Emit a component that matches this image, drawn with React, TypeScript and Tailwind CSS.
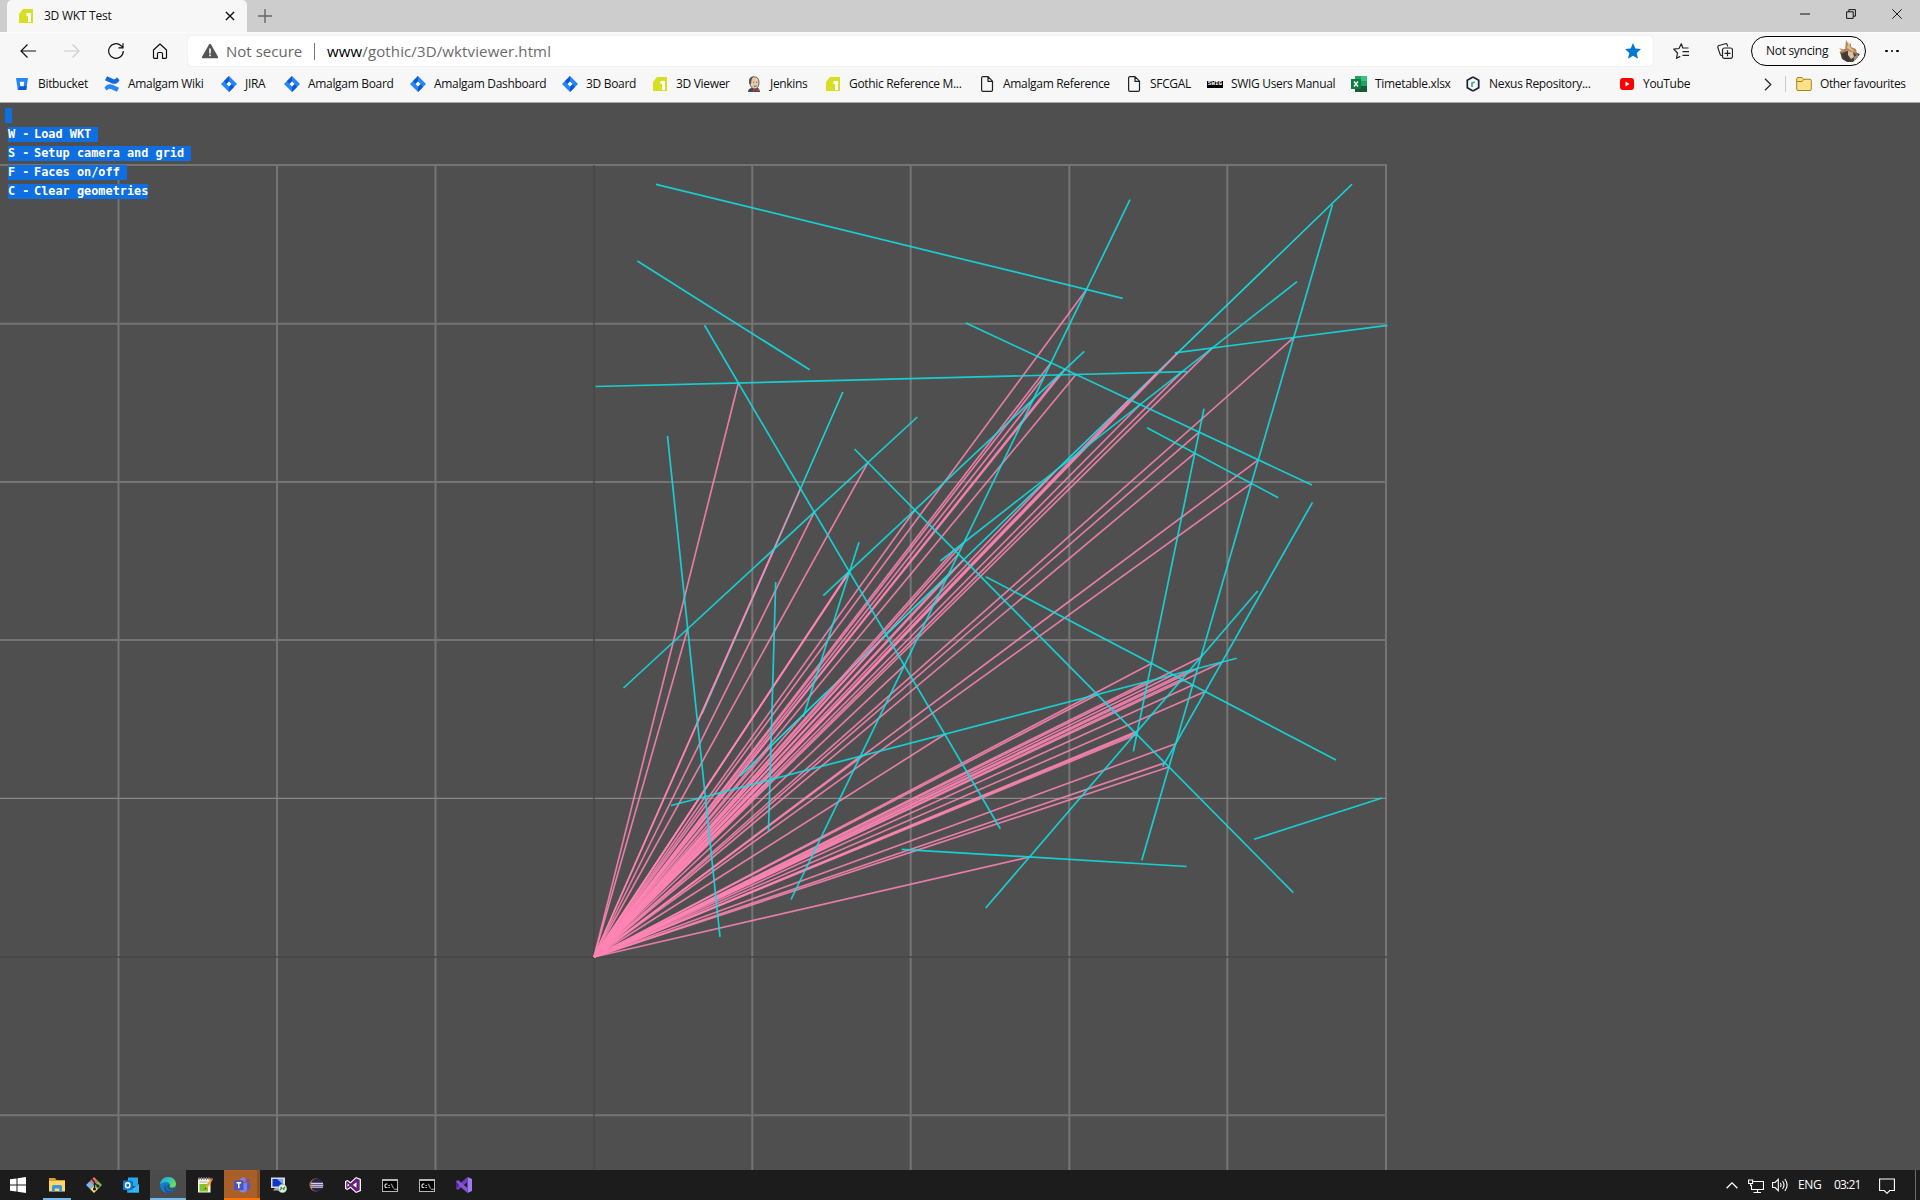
import type { ReactNode } from "react";

type Segment = [number, number, number, number];

const ORIGIN = { x: 594, y: 957 };

const SEGMENTS: Segment[] = [
  [656, 184.3, 1122.7, 298.3],
  [637.3, 261, 809.7, 369.7],
  [704.5, 325.3, 1000.3, 828.7],
  [595.5, 386.5, 1187.3, 371.7],
  [842.8, 392, 702, 714],
  [667.5, 436, 720, 936.8],
  [917.3, 417, 623.5, 688],
  [854.5, 449, 1293.3, 892.7],
  [859, 542.2, 803.3, 716.7],
  [823.3, 595.7, 1084.3, 351.3],
  [966, 323, 1312, 485],
  [1130, 199.7, 791, 899.5],
  [1352, 184.3, 740, 776],
  [1297, 281.7, 940.3, 561],
  [1174.8, 352.8, 1387.5, 325.3],
  [1332.5, 204.5, 1141.8, 860.3],
  [1204, 408.7, 1133.3, 751.3],
  [1147, 427.7, 1278.3, 497.7],
  [1312.5, 502.3, 1162.7, 766.7],
  [985.7, 576.7, 1336, 760],
  [1257.7, 591, 985.7, 908],
  [671, 805.5, 1236.7, 658.3],
  [775.7, 582, 768.5, 830.8],
  [901.7, 849.3, 1186.6, 866.5],
  [1254, 839.3, 1382, 798],
];

// Segments that run nearly along the rays and are hidden behind them.
const BEHIND = [4, 12];

function crossing(a: Segment, b: Segment) {
  const rx = a[2] - a[0];
  const ry = a[3] - a[1];
  const sx = b[2] - b[0];
  const sy = b[3] - b[1];
  const d = rx * sy - ry * sx;
  if (d === 0) return null;
  const t = ((b[0] - a[0]) * sy - (b[1] - a[1]) * sx) / d;
  const u = ((b[0] - a[0]) * ry - (b[1] - a[1]) * rx) / d;
  if (t < 0 || t > 1 || u < 0 || u > 1) return null;
  return { x: a[0] + t * rx, y: a[1] + t * ry };
}

const RAYS = SEGMENTS.flatMap((a, i) =>
  SEGMENTS.slice(i + 1)
    .map((b) => crossing(a, b))
    .filter((p): p is { x: number; y: number } => p !== null),
);

function Line({ s, color, width = 1.7 }: { s: Segment; color: string; width?: number }) {
  return <line x1={s[0]} y1={s[1]} x2={s[2]} y2={s[3]} stroke={color} strokeWidth={width} />;
}

function Scene() {
  return (
    <svg className="absolute inset-0 h-full w-full" viewBox="0 103 1920 1067">
      {[118.5, 277, 435.5, 752.3, 910.7, 1069.3, 1227.3, 1386].map((x) => (
        <Line key={x} s={[x, 164, x, 1170]} color="#757575" width={2} />
      ))}
      {[165, 323.7, 482, 640, 798.4, 1115.3].map((y) => (
        <Line key={y} s={[0, y, 1387, y]} color={y === 798.4 ? "#888888" : "#747474"} width={y === 798.4 ? 1.4 : 2} />
      ))}
      <Line s={[594, 165, 594, 1170]} color="#464646" width={1.4} />
      <Line s={[0, 957, 1387, 957]} color="#464646" width={1.4} />
      {BEHIND.map((i) => (
        <Line key={i} s={SEGMENTS[i]} color="#12dde0" width={1.5} />
      ))}
      {RAYS.map((p, i) => (
        <line key={i} x1={ORIGIN.x} y1={ORIGIN.y} x2={p.x} y2={p.y} stroke="#ff85b5" strokeOpacity={0.86} strokeWidth={1.65} />
      ))}
      {SEGMENTS.map((s, i) => (BEHIND.includes(i) ? null : <Line key={i} s={s} color="#10dfe3e0" />))}
      <Line s={[950, 572.9, 882, 638.7]} color="#12dde0" width={1.4} />
      <Line s={[826, 692.8, 770, 747]} color="#12dde0" width={1.4} />
      <Line s={[758, 758.6, 740, 776]} color="#12dde0" width={1.4} />
    </svg>
  );
}

function Svg({ children, size = 16, className = "" }: { children: ReactNode; size?: number; className?: string }) {
  return (
    <svg width={size} height={size} viewBox="0 0 16 16" fill="none" className={`shrink-0 ${className}`}>
      {children}
    </svg>
  );
}

const OneIcon = () => (
  <Svg>
    <path d="M1 6 5 1h10v14H1z" fill="#d7df23" />
    <path d="M8.500 5h4.500v9H10V8H8.500z" fill="#fff" />
  </Svg>
);
const BitbucketIcon = () => (
  <Svg>
    <path d="M2 2h12l-1.800 12H3.800z" fill="#2684ff" />
    <path d="M11 10h1.800l-.6 4H3.800L6 10z" fill="#0b5cd8" />
    <path d="M5.700 5.800h4.600l-.7 4.400H6.400z" fill="#fff" />
  </Svg>
);
const ConfluenceIcon = () => (
  <Svg>
    <path d="M.5 11.800C3 7.500 6 7.600 9 9.100l6 2.700-2 4-5.500-2.500c-2-1-3.200-.6-4.500 1.400z" fill="#2684ff" />
    <path d="M15.500 4.200C13 8.500 10 8.400 7 6.900L1 4.200l2-4 5.500 2.500c2 1 3.200.6 4.500-1.400z" fill="#1268e3" />
  </Svg>
);
const JiraIcon = () => (
  <Svg>
    <path d="M8 0l8 8-8 8-8-8z" fill="#2684ff" />
    <path d="M8 0v5.500L5.500 8 3 5z M8 16v-5.500L10.500 8l2.500 3z" fill="#0a58d4" />
    <path d="M8 5.500 10.500 8 8 10.500 5.500 8z" fill="#fff" />
  </Svg>
);
const JenkinsIcon = () => (
  <Svg>
    <path d="M2 16c0-3 2-4 4-4l6 0c1 1 2 2 2 4z" fill="#354a5a" />
    <path d="M4 3C5 .3 11-.2 12.500 3.500c1 3 .5 9-3.500 9.500-4 0-6-5-5-10z" fill="#e7cba8" stroke="#444" strokeWidth=".8" />
    <path d="M3.500 8C2 4 4 .5 7.500.6 5.500 2.500 5.500 5 5 8z" fill="#5b554c" />
    <path d="M7.200 6.200h1M10.200 6.200h1M7.800 10q1.500.8 2.800-.2" stroke="#333" strokeWidth=".8" />
    <path d="m7 12.800 2.500 1.200L13 12.600v3L9.500 14.500 7 16z" fill="#d33833" />
  </Svg>
);
const PageIcon = () => (
  <Svg>
    <path d="M2.600 2Q2.600.7 4 .7h5l4.500 4.500v8.800q0 1.300-1.300 1.300H4q-1.400 0-1.400-1.300zM9 .7V5.300h4.500" stroke="#222" strokeWidth="1.200" />
  </Svg>
);
const SwigIcon = () => (
  <span className="flex h-[7px] w-4 shrink-0 items-center justify-center bg-black font-['Liberation_Mono',monospace] text-[6px] font-bold leading-none text-white">SWIG</span>
);
const ExcelIcon = () => (
  <Svg>
    <path d="M4 0h6v16H4z" fill="#21a366" />
    <path d="M10 0h6v5h-6z" fill="#33c481" />
    <path d="M4 5h6v6H4z" fill="#107c41" />
    <path d="M10 5h6v5h-6z" fill="#21a366" />
    <path d="M4 10h12v6H4z" fill="#185c37" />
    <path d="M0 3h10v10H0z" fill="#107c41" />
    <path d="m3 5.500 4 5m0-5-4 5" stroke="#fff" strokeWidth="1.400" />
  </Svg>
);
const NexusIcon = () => (
  <Svg>
    <path d="M8 1 2.300 4.300v7.400L8 15" stroke="#223" strokeWidth="1.700" />
    <path d="m8 15 5.700-3.300V8" stroke="#223" strokeWidth="1.700" />
    <path d="M8 1l5.700 3.300V8" stroke="#223" strokeWidth="1.700" />
    <path d="M7 11V6.200M7 7.600Q8 6 9.700 6.300" stroke="#1fb573" strokeWidth="1.600" />
  </Svg>
);
const YoutubeIcon = () => (
  <Svg>
    <rect x="1" y="2" width="14" height="12" rx="3" fill="#f00" />
    <path d="m6.500 5.500 4 2.500-4 2.500z" fill="#fff" />
  </Svg>
);

const BOOKMARKS: { label: string; box: string; icon: ReactNode }[] = [
  { label: "Bitbucket", box: "w-[90px]", icon: <BitbucketIcon /> },
  { label: "Amalgam Wiki", box: "w-[117px]", icon: <ConfluenceIcon /> },
  { label: "JIRA", box: "w-[63px]", icon: <JiraIcon /> },
  { label: "Amalgam Board", box: "w-[126px]", icon: <JiraIcon /> },
  { label: "Amalgam Dashboard", box: "w-[152px]", icon: <JiraIcon /> },
  { label: "3D Board", box: "w-[90px]", icon: <JiraIcon /> },
  { label: "3D Viewer", box: "w-[94px]", icon: <OneIcon /> },
  { label: "Jenkins", box: "w-[79px]", icon: <JenkinsIcon /> },
  { label: "Gothic Reference M...", box: "w-[154px]", icon: <OneIcon /> },
  { label: "Amalgam Reference", box: "w-[147px]", icon: <PageIcon /> },
  { label: "SFCGAL", box: "w-[81px]", icon: <PageIcon /> },
  { label: "SWIG Users Manual", box: "w-[144px]", icon: <SwigIcon /> },
  { label: "Timetable.xlsx", box: "w-[114px]", icon: <ExcelIcon /> },
  { label: "Nexus Repository...", box: "w-[154px]", icon: <NexusIcon /> },
  { label: "YouTube", box: "w-[145px]", icon: <YoutubeIcon /> },
];

function TabStrip() {
  return (
    <div className="flex h-8 shrink-0 bg-[#cdcdcd] pl-[7px]">
      <div className="flex w-[240px] items-center rounded-t-[5px] bg-[#f7f7f7] pl-[11px] pr-3">
        <OneIcon />
        <span className="ml-[10px] flex-1 text-[12px] tracking-[-0.25px]">3D WKT Test</span>
        <Svg size={10}>
          <path d="m1.500 1.500 13 13m0-13-13 13" stroke="#111" strokeWidth="2.200" />
        </Svg>
      </div>
      <div className="flex w-[37px] items-center justify-end pr-3">
        <Svg size={14}>
          <path d="M8 0v16M0 8h16" stroke="#666" strokeWidth="1.600" />
        </Svg>
      </div>
      <div className="ml-auto flex h-7 items-center gap-9 pr-[18px]">
        <Svg size={10}>
          <path d="M0 8h16" stroke="#111" strokeWidth="1.600" />
        </Svg>
        <Svg size={10}>
          <path d="M1 4.500h10.500V15H1zM4.500 4.500V1H15v10.500h-3.500" stroke="#111" strokeWidth="1.600" />
        </Svg>
        <Svg size={10}>
          <path d="m.5.5 15 15m0-15-15 15" stroke="#111" strokeWidth="1.500" />
        </Svg>
      </div>
    </div>
  );
}

function Avatar() {
  return (
    <svg width="24" height="24" viewBox="0 0 24 24" className="ml-auto shrink-0">
      <path d="M3 13l5-3 8-1 4 5 3 1-3 4-4 4-6 0-5-3z" fill="#54402f" />
      <path d="m8 11 1-10 3 5 2-2 0 4 5 2 1 6-4-3-6-1-5 2-3-1 3-1-3-3z" fill="#b9875c" />
      <path d="m12 2 1 6 5 5-3-1-5-3z" fill="#e0bd92" />
      <path d="M11 12l5 1 1 5-3 2-3-4z" fill="#e2bfa0" />
      <path d="m6 15 4-1 2 5 4 3-6 0-4-3z" fill="#3b3a40" />
      <path d="m17 18 4-3 0 3-4 4z" fill="#8b8f98" />
    </svg>
  );
}

function Toolbar() {
  return (
    <div className="flex h-[38px] shrink-0 items-center border-t border-[#fbfbfb] pb-px pl-5">
      <Svg className="mr-7">
        <path d="M16 8H1M7.500 1.500 1 8l6.500 6.500" stroke="#111" strokeWidth="1.200" />
      </Svg>
      <Svg className="mr-7">
        <path d="M0 8h15M8.500 1.500 15 8l-6.500 6.500" stroke="#ccc" strokeWidth="1.200" />
      </Svg>
      <Svg className="mr-7">
        <path d="M15.300 8A7.300 7.300 0 1 1 13 2.700l1.800 1.800M15 .2v4.600h-4.600" stroke="#111" strokeWidth="1.200" />
      </Svg>
      <Svg className="mr-5">
        <path d="M1.500 7 8 1l6.500 6v7.500q0 .8-.8.800h-3.200V10.500q0-1-1-1h-3q-1 0-1 1v4.800H2.300q-.8 0-.8-.8z" stroke="#111" strokeWidth="1.200" strokeLinejoin="round" />
      </Svg>
      <div className="flex h-[30px] w-[1465px] items-center rounded-[4px] bg-white pl-[14px] pr-3 shadow-[0_0_1px_#ccc]">
        <Svg>
          <path d="M8 .8Q8.500.8 9 1.600l7 12.200q.5 1.500-1 1.500H1q-1.500 0-1-1.500L7 1.600Q7.500.8 8 .8z" fill="#555" />
          <path d="M8 5.500v5M8 11.500v1.800" stroke="#fff" strokeWidth="1.600" />
        </Svg>
        <span className="ml-2 w-[88px] shrink-0 whitespace-nowrap text-[15px] tracking-[0.02px] text-[#666]">Not secure</span>
        <span className="h-[17px] w-px bg-[#777]" />
        <span className="ml-3 text-[15px] tracking-[0.13px] text-[#6b6b6b]">
          <span className="text-black">www</span>/gothic/3D/wktviewer.html
        </span>
        <Svg className="ml-auto">
          <path d="m8 0 2.300 5.400 5.700.5-4.300 4 1.300 5.900L8 12.700 3 15.800l1.300-5.900L0 5.900l5.700-.5z" fill="#0078d4" />
        </Svg>
      </div>
      <Svg className="ml-5">
        <path d="M15.500 5H9.800L8.300.8 6 5.500.7 6.200l3.800 3.800-1 5.300L7.300 13.400M9.500 8.700h6.500M9.500 12.400h6.500" stroke="#222" strokeWidth="1.200" strokeLinejoin="round" />
      </Svg>
      <Svg className="ml-7">
        <path d="M5.500 12.500H4.500Q3.500 12.500 3.200 11.500L.8 4.500Q.5 3 2 2.500L8.500.7q1.300-.3 1.700 1L10.800 3.500" stroke="#222" strokeWidth="1.100" />
        <rect x="5.500" y="5" width="10" height="10.400" rx="2" stroke="#222" strokeWidth="1.200" />
        <path d="M10.500 7.300v6M7.500 10.300h6" stroke="#222" strokeWidth="1.200" />
      </Svg>
      <div className="ml-[18px] flex h-[30px] w-[115px] items-center rounded-full border border-black bg-[#f9f9f9] pl-[14px] pr-1 text-[12px]">
        <span className="whitespace-nowrap tracking-[-0.3px]">Not syncing</span>
        <Avatar />
      </div>
      <div className="ml-[19px] flex gap-[3px]">
        <span className="size-[2.5px] rounded-full bg-black" />
        <span className="size-[2.5px] rounded-full bg-black" />
        <span className="size-[2.5px] rounded-full bg-black" />
      </div>
    </div>
  );
}

function BookmarkBar() {
  return (
    <div className="flex h-[33px] shrink-0 items-center border-b border-[#a9a9a9] pb-[6px] pl-[14px] pt-[2px] text-[12px]">
      {BOOKMARKS.map((b) => (
        <div key={b.label} className={`flex shrink-0 items-center gap-2 ${b.box}`}>
          {b.icon}
          <span className="whitespace-nowrap tracking-[-0.32px]">{b.label}</span>
        </div>
      ))}
      <svg width="8" height="13" viewBox="0 0 8 13" fill="none" className="shrink-0">
        <path d="m1 .8 5.800 5.700L1 12.200" stroke="#222" strokeWidth="1.200" />
      </svg>
      <span className="ml-[13px] mr-[10px] h-4 w-px bg-[#ccc]" />
      <Svg>
        <path d="M.7 3Q.7 1.500 2 1.500h4l1.500 1.800H14q1.300 0 1.300 1.300v8.600q0 1.300-1.300 1.300H2Q.7 14.500.7 13.200z" fill="#fbe18a" stroke="#a98416" />
        <path d="M1 5.500h5l1.500-2" stroke="#a98416" />
      </Svg>
      <span className="ml-2 whitespace-nowrap tracking-[-0.38px]">Other favourites</span>
    </div>
  );
}

const HELP = [
  { key: "W", text: "Load WKT", end: "pr-[7px]" },
  { key: "S", text: "Setup camera and grid", end: "pr-[7px]" },
  { key: "F", text: "Faces on/off", end: "pr-[7px]" },
  { key: "C", text: "Clear geometries", end: "" },
];

function Help() {
  return (
    <div className="relative flex flex-col items-start gap-1 pl-2 pt-[5px] font-['DejaVu_Sans_Mono',monospace] text-[11.88px] font-bold leading-[15px] text-white">
      <span className="-ml-[3px] h-[15px] w-[7px] bg-[#0f6fe0]" />
      {HELP.map((h) => (
        <span key={h.key} className={`flex whitespace-pre bg-[#0f6fe0] ${h.end}`}>
          <span className="w-[26px]">{h.key} -</span>
          {h.text}
        </span>
      ))}
    </div>
  );
}

const CmdIcon = () => (
  <span className="flex h-[13px] w-4 items-center border border-t-2 border-[#b5b5b5] bg-black pl-px font-['DejaVu_Sans_Mono',monospace] text-[6px] font-bold leading-none tracking-[-0.3px] text-white">
    C:\_
  </span>
);

const TASKS: { tile?: string; icon: ReactNode }[] = [
  {
    tile: "before:absolute before:bottom-0 before:left-[4px] before:h-[2px] before:w-[28px] before:bg-[#76b9ed]",
    icon: (
      <Svg>
        <path d="M0 1h6l1.500 2H16v3H0z" fill="#d9a028" />
        <path d="M0 4h16v10.500H0z" fill="#ffd668" />
        <path d="M3 15V9.500Q3 8 4.500 8h7Q13 8 13 9.500V15h-2.800v-3.500H5.800V15z" fill="#3a97de" />
      </Svg>
    ),
  },
  {
    icon: (
      <Svg>
        <path d="m8 0 4 4-4 4-4-4z" fill="#e8716a" />
        <path d="m4 4 4 4-4 4-4-4z" fill="#7db4ee" />
        <path d="m12 4 4 4-4 4-4-4z" fill="#7fbf5a" />
        <path d="m8 8 4 4-4 4-4-4z" fill="#f2dc84" />
        <path d="m6 2 2.500 3v8M8.500 6l3.500 3" stroke="#222" strokeWidth="1.300" />
        <circle cx="8.500" cy="12" r="1.600" fill="#222" />
        <circle cx="12" cy="9" r="1.500" fill="#222" />
      </Svg>
    ),
  },
  {
    icon: (
      <Svg>
        <path d="M5 .5h10v9H5z" fill="#28a8ea" />
        <path d="M5 5h5v5H5z" fill="#0364b8" />
        <path d="M4 8l6 3 6-4v8.500H4z" fill="#1490df" />
        <path d="m4 15.500 12-8v8z" fill="#35b8f1" />
        <path d="M0 3.500h9.500v9.500H0z" fill="#0f78d4" />
        <ellipse cx="4.700" cy="8.200" rx="2.200" ry="2.500" stroke="#fff" strokeWidth="1.400" />
      </Svg>
    ),
  },
  {
    tile: "bg-[#4b4b4b] before:absolute before:bottom-0 before:left-0 before:h-[2px] before:w-full before:bg-[#76b9ed]",
    icon: (
      <svg width="16" height="16" viewBox="0 0 16 16">
        <defs>
          <linearGradient id="edgeTop" x1="0" y1="0" x2="1" y2=".4">
            <stop offset="0" stopColor="#27a9df" />
            <stop offset=".6" stopColor="#32c5b6" />
            <stop offset="1" stopColor="#68de58" />
          </linearGradient>
        </defs>
        <circle cx="8" cy="8" r="8" fill="#1380cf" />
        <path d="M0 7.500C.5 3 4 0 8 0c5 0 8 3.500 8 7 0 2.500-2 3.500-4 3.500-1.500 0-2.500-.6-2.200-1.200C11 7 8.500 5 6 5 3 5 1 6 0 7.500z" fill="url(#edgeTop)" />
        <path d="M6 6.500c-1 1.500-1 5 2.500 7 2.500 1 5 0 6.200-1.200C13 15.500 9.500 16.500 7 15.900 3 14 3.500 8.500 6 6.500z" fill="#0c59a4" />
        <path d="M9.300 7.500c.8 1.300-.5 2-.2 2.800.8 1.500 3.800 1.500 6 .3l-.5 2C12 14 7 13 7 9.500c0-1 1-2.200 2.300-2z" fill="#4b4b4b" />
      </svg>
    ),
  },
  {
    icon: (
      <Svg>
        <path d="M1 1.500h12.500v14H1z" fill="#f5f5ea" />
        <path d="M2.500 7h8.500v7.500H2.500z" fill="#7cc52c" />
        <path d="M2 0v3M4.500 0v3M7 0v3M9.500 0v3M12 0v3" stroke="#777" />
        <path d="M2.500 5h8" stroke="#aaa" />
        <path d="m7.500 12.500 1-3 5.500-8.500 2 1.300L10.500 11z" fill="#eda52a" />
        <path d="m13 2 1-1.500L16 2l-1 1.500z" fill="#d84638" />
        <path d="m7.500 12.500.7-2 1.300 1z" fill="#333" />
      </Svg>
    ),
  },
  {
    tile: "bg-[#a95f27] border-r-[3px] border-[#8d5023] pl-[3px] before:absolute before:bottom-0 before:left-0 before:h-[2px] before:w-[36px] before:bg-[#ff7300]",
    icon: (
      <Svg>
        <circle cx="9" cy="2.800" r="2.500" fill="#7b83eb" />
        <circle cx="14" cy="3.600" r="1.700" fill="#5059c9" />
        <path d="M11 6h5v4.500Q16 13 13.500 13H11z" fill="#5059c9" />
        <path d="M5 6h8v5.500q0 4-4 4t-4-4z" fill="#7b83eb" />
        <path d="M0 3.500h9.500V13H0z" fill="#4b53bc" />
        <path d="M2.500 5.800h4.600M4.800 5.800v5.500" stroke="#fff" strokeWidth="1.400" />
      </Svg>
    ),
  },
  {
    icon: (
      <Svg>
        <path d="M0 .5h14V11H0z" fill="#d8dde2" />
        <path d="M1.500 2h10v7.500h-10z" fill="#1038c8" />
        <path d="M6 2h5.500v5z" fill="#80a8f0" />
        <path d="M4 11h5v2.500H2z" fill="#a7adb3" />
        <circle cx="11.500" cy="11.500" r="4.300" fill="#e8ece8" stroke="#888" strokeWidth=".5" />
        <path d="m8.800 13 2-1.800-1.200-1.200M14.200 10l-2 1.800 1.200 1.200" stroke="#23973a" strokeWidth="1.200" />
      </Svg>
    ),
  },
  {
    icon: (
      <Svg>
        <circle cx="8" cy="8" r="6.500" fill="#f08c23" />
        <circle cx="9" cy="8" r="6.500" fill="#2c2255" />
        <path d="M3 6.300h12M2.800 8.200h12.500M3 10.100h12" stroke="#fff" strokeWidth="1" />
      </Svg>
    ),
  },
  {
    icon: (
      <Svg>
        <path d="M11 0l5 2v12l-5 2-5.500-5L2.500 13 0 12V4l2.500-1 3 2z" fill="#fff" />
        <path d="m11.200 1.300 3.500 1.400v10.600l-3.500 1.400L5.500 9.500 2.700 11.800l-1.500-.6V4.800l1.500-.6 2.800 2.300z" fill="#68217a" />
        <path d="M11.500 5.200v5.600L7.800 8zM2.600 6.300v3.400L4.300 8z" fill="#fff" />
      </Svg>
    ),
  },
  { icon: <CmdIcon /> },
  { icon: <CmdIcon /> },
  {
    icon: (
      <Svg>
        <path d="M11.500 0 16 2v12l-4.500 2z" fill="#a179f2" />
        <path d="M11.500 0v5L2 13 0 11.800V10z" fill="#6d3fc0" />
        <path d="M0 4.200 2 3l9.500 8v5L0 6z" fill="#8552d8" />
        <path d="M0 4.200v7.600L3 8z" fill="#52218a" />
      </Svg>
    ),
  },
];

function Taskbar() {
  return (
    <div className="flex h-[30px] shrink-0 items-center bg-[#1c1c1c] text-white">
      <div className="flex h-full w-[38px] items-center pl-[10px]">
        <Svg>
          <path d="M0 2.300 6.500 1.400v6.100H0zM7.500 1.200 16 0v7.500H7.500zM0 8.500h6.500v6.100L0 13.700zM7.500 8.500H16V16l-8.500-1.200z" fill="#fff" />
        </Svg>
      </div>
      <div className="flex h-full gap-px pl-px">
        {TASKS.map((t, i) => (
          <div key={i} className={`relative flex h-full w-9 items-center justify-center ${t.tile ?? ""}`}>
            {t.icon}
          </div>
        ))}
      </div>
      <div className="ml-auto flex h-full items-center">
        <svg width="12" height="7" viewBox="0 0 12 7" fill="none">
          <path d="m.6 6.300 5.400-5.400 5.400 5.400" stroke="#fff" strokeWidth="1.300" />
        </svg>
        <Svg className="ml-[10px] mt-px">
          <path d="M5 3.500h10.500v8H3.500V7M9.500 11.500V14.500M5.500 14.500h7.500" stroke="#fff" strokeWidth="1.100" />
          <path d="M.6 2h4v3.500h-4zM2.600 5.500V8" stroke="#fff" strokeWidth="1.100" />
        </Svg>
        <Svg className="ml-2">
          <path d="M.6 5.500h2.500L6.300 2.300v11.400L3.100 10.500H.6z" stroke="#fff" strokeWidth="1.100" />
          <path d="M8.300 6q1.500 2 0 4M10.500 4q3 4 0 8M12.800 2q4.600 6 0 12" stroke="#fff" strokeWidth="1.100" />
        </Svg>
        <span className="ml-[10px] w-9 text-[12px] tracking-[-0.3px]">ENG</span>
        <span className="w-[45px] text-[12px] tracking-[-0.8px]">03:21</span>
        <Svg className="mt-px">
          <path d="M.6 1h14.800v11.500h-4.700L8 15.300 5.300 12.500H.6z" stroke="#fff" strokeWidth="1.100" />
        </Svg>
        <span className="ml-5 mr-1 h-full w-px bg-[#6c6c6c]" />
      </div>
    </div>
  );
}

export default function App() {
  return (
    <div className="flex h-[1200px] w-[1920px] flex-col overflow-hidden bg-[#f7f7f7] font-['Open_Sans',sans-serif] text-[#111]">
      <TabStrip />
      <Toolbar />
      <BookmarkBar />
      <main className="relative flex-1 bg-[#4f4f4f]">
        <Scene />
        <Help />
      </main>
      <Taskbar />
    </div>
  );
}
